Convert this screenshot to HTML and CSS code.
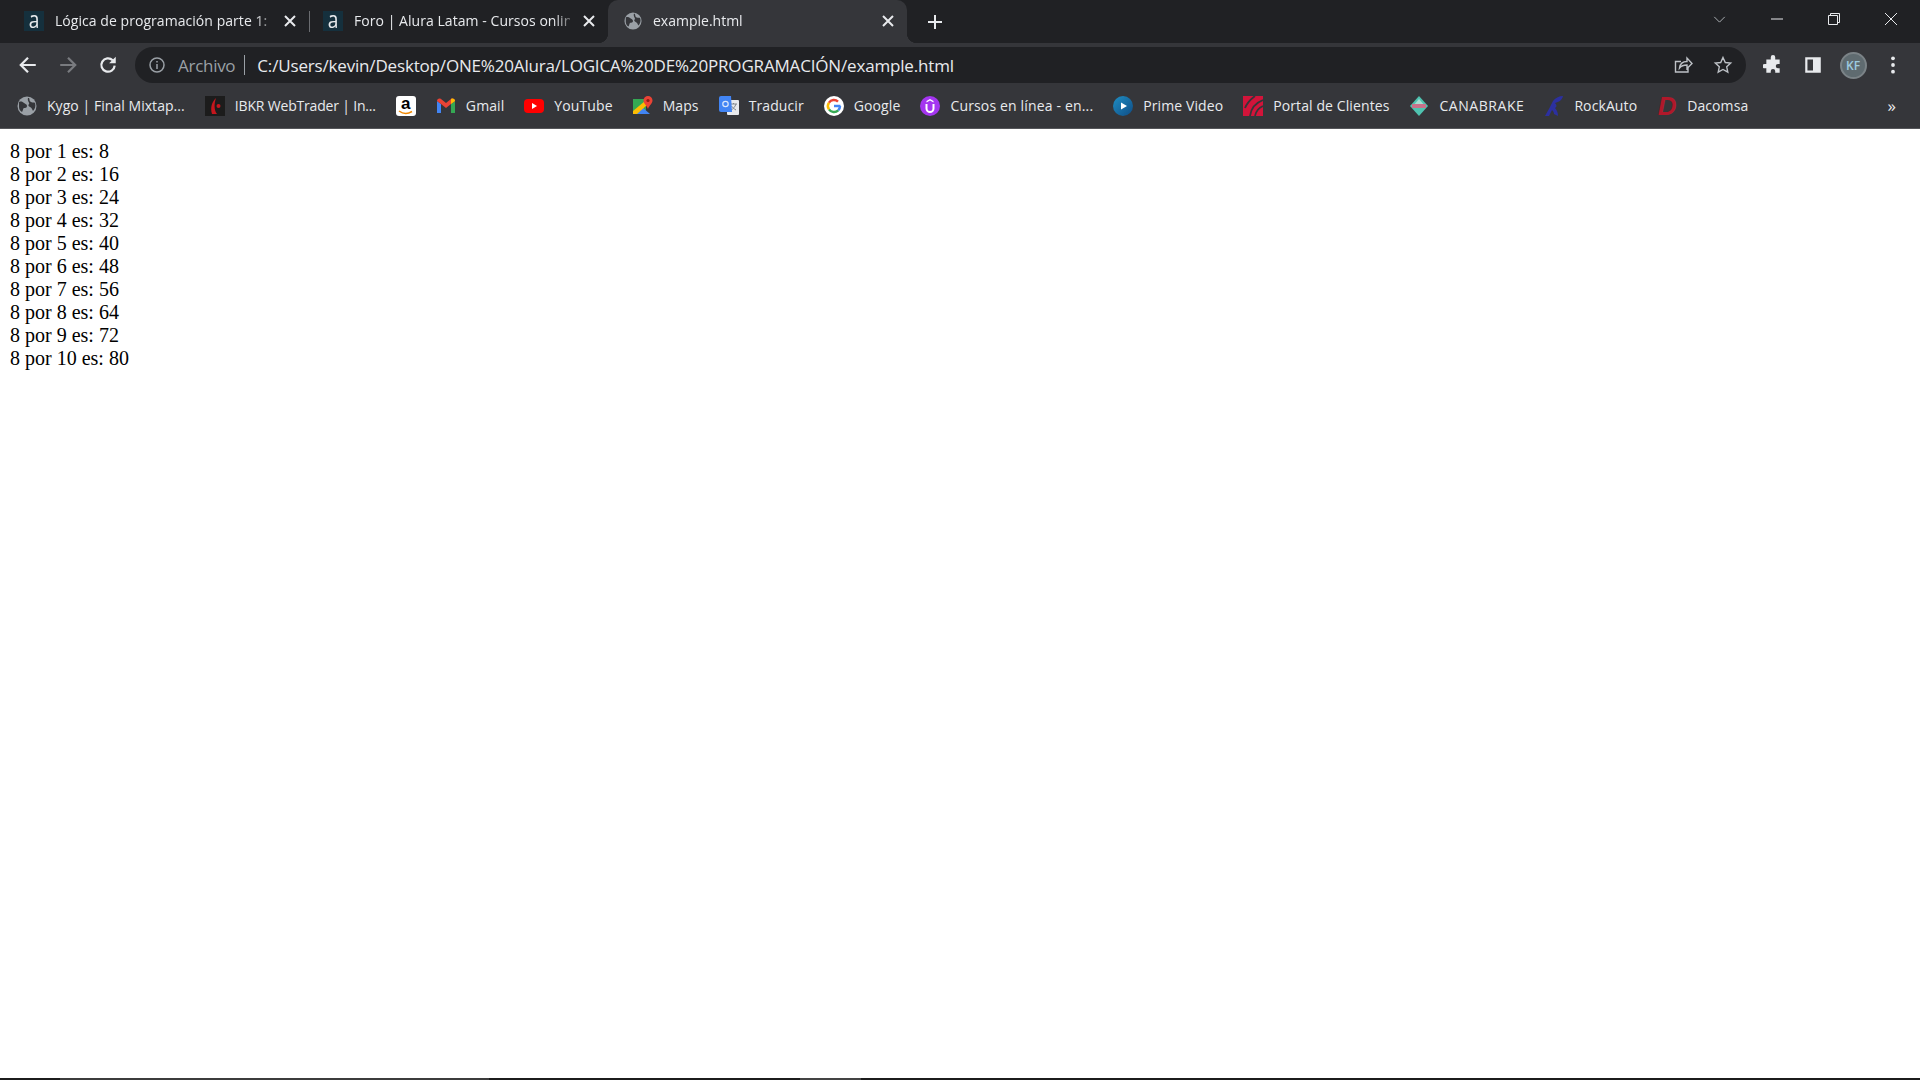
FILE: index.html
```html
<!DOCTYPE html>
<html lang="es">

<head>
    <meta charset="UTF-8">
    <meta name="viewport" content="width=device-width, initial-scale=1.0">
    <title>example.html</title>
    <link rel="stylesheet" href="styles.css">
</head>

<body>
    <svg class="defs" width="0" height="0">
        <symbol id="globe" viewBox="0 0 20 20">
            <circle cx="10" cy="10" r="9.500" fill="#9aa0a6"/>
            <path d="M2 6c2-1 4 0 5 1s3 1 3 3-2 2-3 2-1 3-2 4c-2-1-3-3-3-5zM12 2c1 2 0 3 2 4s3 0 4 1c1 3 0 6-2 8-1-2-1-3-3-4s-2-2-1-3-2-3-1-6z" fill="#35363a"/>
        </symbol>
    </svg>

    <header class="chrome">
        <div class="tabstrip">
            <div class="tab">
                <span class="alura-icon"><span>a</span></span>
                <span class="tab-title">Lógica de programación parte 1:</span>
                <svg class="tab-close" viewBox="0 0 16 16"><path d="M3 3l10 10M13 3L3 13"/></svg>
            </div>
            <div class="tab tab-second">
                <span class="alura-icon"><span>a</span></span>
                <span class="tab-title">Foro | Alura Latam - Cursos onlin</span>
                <svg class="tab-close" viewBox="0 0 16 16"><path d="M3 3l10 10M13 3L3 13"/></svg>
            </div>
            <div class="tab tab-active">
                <svg class="fav" viewBox="0 0 20 20"><use href="#globe"/></svg>
                <span class="tab-title">example.html</span>
                <svg class="tab-close" viewBox="0 0 16 16"><path d="M3 3l10 10M13 3L3 13"/></svg>
            </div>
            <svg class="new-tab" viewBox="0 0 16 16"><path d="M8 1v14M1 8h14"/></svg>

            <svg class="tab-search" viewBox="0 0 14 8"><path d="M1 1l6 6 6-6"/></svg>
            <div class="win-btn">
                <svg viewBox="0 0 14 14"><path d="M1 7h12"/></svg>
            </div>
            <div class="win-btn">
                <svg viewBox="0 0 14 14"><path d="M1.500 3.500h9v9h-9zM3.500 3.500v-2h9v9h-2"/></svg>
            </div>
            <div class="win-btn">
                <svg viewBox="0 0 14 14"><path d="M1 1l12 12M13 1L1 13"/></svg>
            </div>
        </div>

        <div class="toolbar">
            <div class="nav-btn">
                <svg viewBox="0 0 18 18"><path d="M16 9H3M9 2.500L2.500 9 9 15.500"/></svg>
            </div>
            <div class="nav-btn nav-off">
                <svg viewBox="0 0 18 18"><path d="M2 9h13M9 2.500L15.500 9 9 15.500"/></svg>
            </div>
            <div class="nav-btn">
                <svg viewBox="0 0 18 18"><path d="M15 9.500A6 6 0 1 1 13.200 4.700"/><path class="solid" d="M16 1.500v6h-6z"/></svg>
            </div>

            <div class="omnibox">
                <svg class="info" viewBox="0 0 18 18">
                    <circle cx="9" cy="9" r="7"/>
                    <path d="M9 8v5M9 5v1.600"/>
                </svg>
                <span class="scheme">Archivo</span>
                <span class="omni-sep"></span>
                <span class="url">C:/Users/kevin/Desktop/ONE%20Alura/LOGICA%20DE%20PROGRAMACIÓN/example.html</span>
                <svg class="omni-icon" viewBox="0 0 20 20"><path d="M15 11.500V17H2.500V6.500H8M6.500 13c.5-4 3-6.500 7.500-6.500V3l5 5.500-5 5V10c-3.500 0-6 1-7.500 3z"/></svg>
                <svg class="omni-icon" viewBox="0 0 20 20"><path d="M10 2.500l2.300 5 5.400.6-4 3.700 1.100 5.400-4.800-2.700-4.800 2.700 1.100-5.400-4-3.700 5.400-.6z"/></svg>
            </div>

            <div class="nav-btn">
                <svg viewBox="0 0 18 18"><path class="solid" d="M7 2a2 2 0 0 1 4 0v2h4v4h-1.500a2 2 0 0 0 0 4H15v4h-4v-1.500a2 2 0 0 0-4 0V16H3v-4H1.500a2 2 0 0 1 0-4H3V4h4z"/></svg>
            </div>
            <div class="nav-btn">
                <svg viewBox="0 0 18 18"><path class="solid" fill-rule="evenodd" d="M2 2h14v14H2zM4 4v10h5V4z"/></svg>
            </div>
            <div class="nav-btn">
                <span class="avatar">KF</span>
            </div>
            <div class="nav-btn">
                <svg viewBox="0 0 18 18"><circle class="solid" cx="9" cy="3" r="1.700"/><circle class="solid" cx="9" cy="9" r="1.700"/><circle class="solid" cx="9" cy="15" r="1.700"/></svg>
            </div>
        </div>

        <nav class="bookmarks">
            <a class="bm">
                <svg class="fav" viewBox="0 0 20 20"><use href="#globe"/></svg>
                <span class="bm-kygo">Kygo | Final Mixtap...</span>
            </a>
            <a class="bm">
                <svg class="fav" viewBox="0 0 20 20"><rect width="20" height="20" fill="#1c1c1c"/><path d="M11 2C7 6 5 11 7 18h5C9 14 9 8 11 2z" fill="#c5161d"/><circle cx="13.500" cy="10" r="2" fill="#c5161d"/></svg>
                <span class="bm-ibkr">IBKR WebTrader | In...</span>
            </a>
            <a class="bm">
                <span class="amazon-icon">a<svg viewBox="0 0 16 5"><path d="M1 1c4 3 9 3 13 .5"/></svg></span>
            </a>
            <a class="bm">
                <svg class="fav" viewBox="0 0 20 20">
                    <path d="M1 5v12h4V8z" fill="#4285f4"/>
                    <path d="M15 8v9h4V5z" fill="#34a853"/>
                    <path d="M1 5c0-2 2-3 4-2l5 4 5-4c2-1 4 0 4 2l-4 3-5 4-5-4z" fill="#ea4335"/>
                    <path d="M15 3c2-1 4 0 4 2l-4 3z" fill="#fbbc04"/>
                </svg>
                <span>Gmail</span>
            </a>
            <a class="bm">
                <svg class="fav" viewBox="0 0 20 20"><rect y="3" width="20" height="14" rx="4" fill="#f00"/><path d="M8 7l5 3-5 3z" fill="#fff"/></svg>
                <span>YouTube</span>
            </a>
            <a class="bm">
                <svg class="fav" viewBox="0 0 20 20">
                    <path d="M0 3h13v15H0z" fill="#34a853"/>
                    <path d="M3 18l6-7 8 7z" fill="#4285f4"/>
                    <path d="M0 15L12 5l2 4L4 18H0z" fill="#fbbc04"/>
                    <path d="M15 0a4.500 4.500 0 0 1 4.500 4.500c0 3-3 4.500-4.500 8.500-1.500-4-4.500-5.500-4.500-8.500A4.500 4.500 0 0 1 15 0z" fill="#ea4335"/>
                    <circle cx="15" cy="4.500" r="1.600" fill="#8e1c14"/>
                </svg>
                <span>Maps</span>
            </a>
            <a class="bm">
                <svg class="fav" viewBox="0 0 20 20">
                    <rect x="8" y="4" width="12" height="15" rx="1" fill="#e8eaed"/>
                    <path d="M11 8h7M14.500 7v1M17 8c-1 3-3 5-5 6M12.500 10c1 2 3 3 4.500 4" stroke="#80868b" fill="none"/>
                    <path d="M2 0h10l1 16H2a2 2 0 0 1-2-2V2a2 2 0 0 1 2-2z" fill="#4285f4"/>
                    <circle cx="6.500" cy="8" r="2.700" fill="none" stroke="#dce8fb" stroke-width="1.200"/>
                </svg>
                <span>Traducir</span>
            </a>
            <a class="bm">
                <svg class="fav" viewBox="0 0 20 20">
                    <circle cx="10" cy="10" r="10" fill="#fff"/>
                    <path d="M16 10a6 6 0 0 1-1.800 4.300" fill="none" stroke="#4285f4" stroke-width="2.500"/>
                    <path d="M10 10h6.500" stroke="#4285f4" stroke-width="2.500"/>
                    <path d="M14.200 14.300A6 6 0 0 1 5 13.400" fill="none" stroke="#34a853" stroke-width="2.500"/>
                    <path d="M5 13.400a6 6 0 0 1 0-6.800" fill="none" stroke="#fbbc04" stroke-width="2.500"/>
                    <path d="M5 6.600a6 6 0 0 1 9-.9" fill="none" stroke="#ea4335" stroke-width="2.500"/>
                </svg>
                <span>Google</span>
            </a>
            <a class="bm">
                <svg class="fav" viewBox="0 0 20 20">
                    <circle cx="10" cy="10" r="10" fill="#a435f0"/>
                    <path d="M6.500 8v4.500a3.500 3.500 0 0 0 7 0V8" fill="none" stroke="#fff" stroke-width="2"/>
                    <path d="M10 3l3.500 2v1.500L10 4.500 6.500 6.500V5z" fill="#fff"/>
                </svg>
                <span class="bm-wide">Cursos en línea - en...</span>
            </a>
            <a class="bm">
                <svg class="fav" viewBox="0 0 20 20">
                    <defs>
                        <linearGradient id="prime" x1="0" y1="0" x2="1" y2="1">
                            <stop offset="0" stop-color="#1f8fc4"/>
                            <stop offset="1" stop-color="#0f4c85"/>
                        </linearGradient>
                    </defs>
                    <circle cx="10" cy="10" r="10" fill="url(#prime)"/>
                    <path d="M8 6.500l6 3.500-6 3.500z" fill="#fff"/>
                </svg>
                <span>Prime Video</span>
            </a>
            <a class="bm">
                <svg class="fav" viewBox="0 0 20 20">
                    <rect width="20" height="20" fill="#d2143a"/>
                    <path d="M7 20C8 12 12 7 20 4M12 20c1-5 3-8 8-10M2 12C4 7 8 3 12 0" fill="none" stroke="#35363a" stroke-width="1.800"/>
                </svg>
                <span>Portal de Clientes</span>
            </a>
            <a class="bm">
                <svg class="fav" viewBox="0 0 20 20">
                    <path d="M10 0l9 10-9 10-9-10z" fill="#4fc3b0"/>
                    <path d="M10 3l6 7H4z" fill="#a8dcd2"/>
                    <rect x="3" y="8" width="14" height="4" fill="#c9718a"/>
                </svg>
                <span class="bm-cana">CANABRAKE</span>
            </a>
            <a class="bm">
                <svg class="fav" viewBox="0 0 20 20">
                    <path d="M1 20C4 15 7 9 9 5c2-3 6-5 10-5-1 4-4 6-8 7 2 2 2 4 0 5 2 2 3 5 3 8l-4-2c0-2-1-3-2-4l-3 6z" fill="#2c30a0"/>
                </svg>
                <span>RockAuto</span>
            </a>
            <a class="bm">
                <span class="dacomsa-icon">D</span>
                <span>Dacomsa</span>
            </a>
            <span class="bm-more">»</span>
        </nav>
    </header>

    <main class="page">
        8 por 1 es: 8<br>
        8 por 2 es: 16<br>
        8 por 3 es: 24<br>
        8 por 4 es: 32<br>
        8 por 5 es: 40<br>
        8 por 6 es: 48<br>
        8 por 7 es: 56<br>
        8 por 8 es: 64<br>
        8 por 9 es: 72<br>
        8 por 10 es: 80<br>
    </main>

    <footer class="taskbar">
        <span class="task-a"></span>
        <span class="task-b"></span>
    </footer>
</body>

</html>
```

FILE: styles.css
```css
html,
body {
    height: 100%;
}

body {
    margin: 0;
    display: flex;
    flex-direction: column;
    overflow: hidden;
    background-color: #fff;
    font-family: "Liberation Serif", serif;
}

.defs {
    position: absolute;
}

.chrome {
    flex: none;
    color: #e8eaed;
    font-family: "Open Sans", sans-serif;
    font-size: 14px;
}

svg {
    display: block;
    flex: none;
}

/* Pestañas */
.tabstrip {
    display: flex;
    align-items: center;
    height: 43px;
    padding: 0 1px 0 10px;
    background-color: #202124;
}

.tab {
    position: relative;
    display: flex;
    align-items: center;
    flex: none;
    gap: 11px;
    box-sizing: border-box;
    width: 299px;
    height: 43px;
    padding: 0 11px 2px 14px;
    letter-spacing: 0.05px;
}

.tab-second::before {
    content: "";
    position: absolute;
    left: 0;
    top: 11px;
    width: 1px;
    height: 21px;
    background-color: #6a6c70;
}

.tab-active {
    padding-left: 16px;
    background-color: #35363a;
    border-radius: 10px 10px 0 0;
    letter-spacing: 0;
}

.tab-active::before,
.tab-active::after {
    content: "";
    position: absolute;
    bottom: 0;
    width: 10px;
    height: 10px;
}

.tab-active::before {
    left: -10px;
    background: radial-gradient(circle at 0 0, transparent 10px, #35363a 10.500px);
}

.tab-active::after {
    right: -10px;
    background: radial-gradient(circle at 100% 0, transparent 10px, #35363a 10.500px);
}

.tab-title {
    flex: 1;
    overflow: hidden;
    white-space: nowrap;
    -webkit-mask-image: linear-gradient(to right, #000 calc(100% - 16px), rgba(0, 0, 0, 0.35));
    mask-image: linear-gradient(to right, #000 calc(100% - 16px), rgba(0, 0, 0, 0.35));
}

.tab-close {
    width: 16px;
    height: 16px;
    fill: none;
    stroke: #e8eaed;
    stroke-width: 2;
}

.alura-icon {
    flex: none;
    width: 20px;
    height: 20px;
    background-color: #15303d;
    color: #e8eaed;
    font-size: 24px;
    line-height: 16px;
    text-align: center;
}

.alura-icon span {
    display: block;
    transform: scaleX(0.8);
}

.fav {
    width: 20px;
    height: 20px;
}

.tab-active .fav {
    width: 18px;
    height: 18px;
}

.new-tab {
    width: 16px;
    height: 16px;
    margin-left: 20px;
    fill: none;
    stroke: #e8eaed;
    stroke-width: 2;
}

.tab-search {
    align-self: flex-start;
    width: 13px;
    height: 7px;
    margin-top: 16px;
    margin-left: auto;
    margin-right: 22px;
    fill: none;
    stroke: #bdc1c6;
    stroke-width: 1;
}

.win-btn {
    display: flex;
    align-items: center;
    justify-content: center;
    align-self: flex-start;
    width: 57px;
    height: 38px;
}

.win-btn svg {
    width: 14px;
    height: 14px;
    fill: none;
    stroke: #e8eaed;
    stroke-width: 1;
}

/* Barra de direcciones */
.toolbar {
    display: flex;
    align-items: center;
    height: 40px;
    padding: 2px 7px 0 8px;
    background-color: #35363a;
}

.nav-btn {
    display: flex;
    align-items: center;
    justify-content: center;
    flex: none;
    width: 40px;
    height: 36px;
}

.nav-btn svg {
    width: 20px;
    height: 20px;
    fill: none;
    stroke: #e8eaed;
    stroke-width: 2;
}

.nav-btn svg .solid {
    fill: #e8eaed;
    stroke: none;
}

.nav-off svg {
    stroke: #797b7f;
}

.omnibox {
    display: flex;
    align-items: center;
    flex: 1;
    height: 36px;
    margin: 0 7px;
    padding: 0 13px;
    background-color: #202124;
    border-radius: 18px;
    font-size: 17px;
}

.info {
    width: 18px;
    height: 18px;
    fill: none;
    stroke: #9aa0a6;
    stroke-width: 1.500;
}

.scheme {
    margin-left: 12px;
    color: #9aa0a6;
    letter-spacing: -0.28px;
}

.omni-sep {
    width: 1px;
    height: 20px;
    margin: 0 12px 0 9px;
    background-color: #9aa0a6;
}

.url {
    flex: 1;
    white-space: nowrap;
    letter-spacing: -0.17px;
}

.omni-icon {
    width: 20px;
    height: 20px;
    margin-left: 20px;
    fill: none;
    stroke: #bdc1c6;
    stroke-width: 1.400;
}

.avatar {
    width: 27px;
    height: 27px;
    box-sizing: border-box;
    border: 2px solid #7b8387;
    border-radius: 50%;
    background-color: #5f6b70;
    color: #9ecbe0;
    font-size: 12px;
    font-weight: 600;
    line-height: 23px;
    text-align: center;
}

/* Marcadores */
.bookmarks {
    display: flex;
    align-items: center;
    gap: 20px;
    height: 41px;
    padding: 0 0 2px 17px;
    background-color: #35363a;
    border-bottom: 1px solid #55565a;
    letter-spacing: 0.1px;
}

.bm {
    display: flex;
    align-items: center;
    gap: 10px;
    white-space: nowrap;
}

.bm-kygo {
    letter-spacing: 0.05px;
}

.bm-ibkr {
    letter-spacing: -0.18px;
}

.bm-wide {
    letter-spacing: 0.16px;
}

.bm-cana {
    letter-spacing: 0.55px;
}

.amazon-icon {
    position: relative;
    display: block;
    width: 20px;
    height: 20px;
    background-color: #fff;
    border-radius: 3px;
    color: #000;
    font-family: "Liberation Sans", sans-serif;
    font-size: 17px;
    font-weight: 700;
    line-height: 16px;
    text-align: center;
}

.amazon-icon svg {
    position: absolute;
    left: 2px;
    bottom: 1px;
    width: 16px;
    height: 5px;
    fill: none;
    stroke: #f08804;
    stroke-width: 1.500;
}

.dacomsa-icon {
    width: 20px;
    color: #b0182a;
    font-family: "Liberation Sans", sans-serif;
    font-size: 26px;
    font-style: italic;
    font-weight: 700;
    line-height: 20px;
    text-align: center;
}

.bm-more {
    margin-left: auto;
    margin-right: 24px;
    font-size: 17px;
}

/* Contenido */
.page {
    flex: 1;
    padding: 11px 10px 10px;
    color: #000;
    font-size: 20px;
    line-height: 23px;
}

.taskbar {
    display: flex;
    flex: none;
    height: 2px;
    padding-left: 60px;
    background-color: #1c1c1c;
}

.task-a {
    width: 429px;
    background-color: #3c3c3c;
}

.task-b {
    width: 61px;
    margin-left: 311px;
    background-color: #444;
}
```
